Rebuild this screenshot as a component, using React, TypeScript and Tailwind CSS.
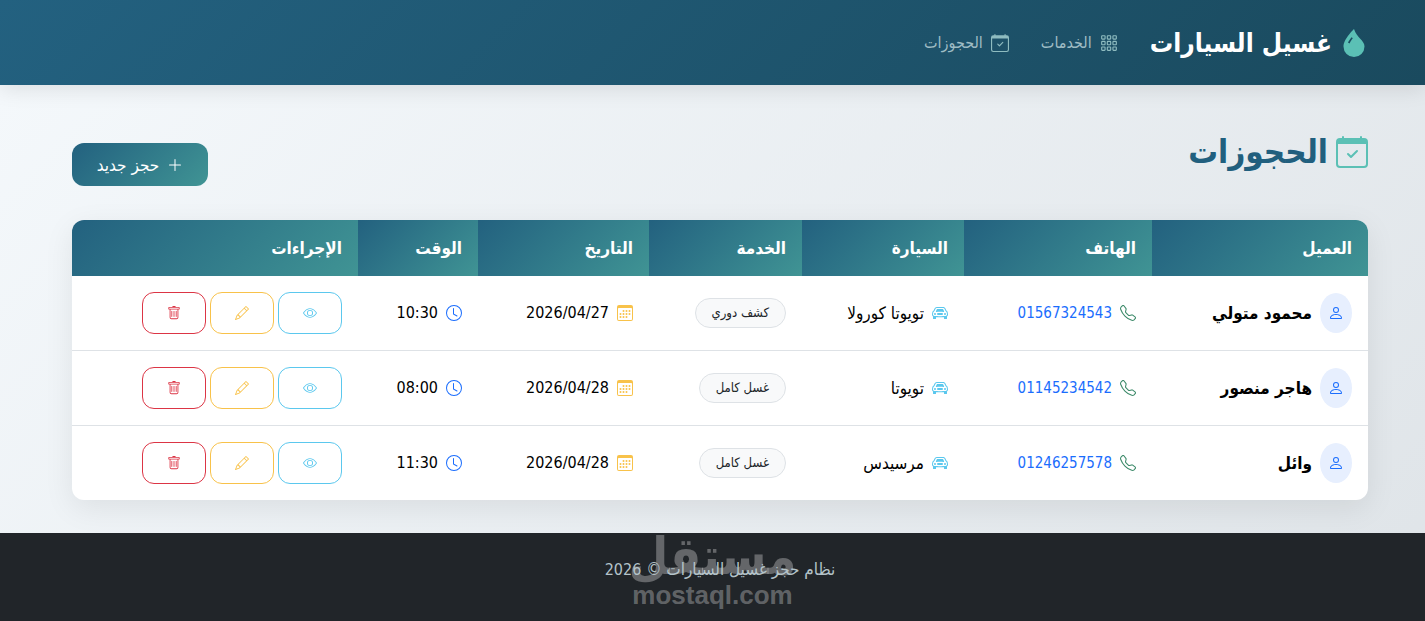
import type { ReactNode } from 'react';
import type { IconType } from 'react-icons';
import {
  BsCalendar3, BsCalendarCheck, BsCarFront, BsClock, BsDropletFill, BsEye,
  BsGrid3X3Gap, BsPencil, BsPerson, BsPlusLg, BsTelephone, BsTrash,
} from 'react-icons/bs';

interface Booking {
  id: number;
  customer: string;
  phone: string;
  car: string;
  service: string;
  date: string;
  time: string;
}

const BOOKINGS: Booking[] = [
  { id: 1, customer: 'محمود متولي', phone: '01567324543', car: 'تويوتا كورولا', service: 'كشف دوري', date: '2026/04/27', time: '10:30' },
  { id: 2, customer: 'هاجر منصور', phone: '01145234542', car: 'تويوتا', service: 'غسل كامل', date: '2026/04/28', time: '08:00' },
  { id: 3, customer: 'وائل', phone: '01246257578', car: 'مرسيدس', service: 'غسل كامل', date: '2026/04/28', time: '11:30' },
];

const COLUMNS = [
  { label: 'العميل', width: 'w-[216px]' },
  { label: 'الهاتف', width: 'w-[188px]' },
  { label: 'السيارة', width: 'w-[162px]' },
  { label: 'الخدمة', width: 'w-[153px]' },
  { label: 'التاريخ', width: 'w-[171px]' },
  { label: 'الوقت', width: 'w-[120px]' },
  { label: 'الإجراءات', width: 'w-[286px]' },
];

const ACTIONS: { label: string; icon: IconType; colour: string }[] = [
  { label: 'عرض', icon: BsEye, colour: 'border-[#5bc8ee] text-[#5bc8ee]' },
  { label: 'تعديل', icon: BsPencil, colour: 'border-[#f8c24a] text-[#f8c24a]' },
  { label: 'حذف', icon: BsTrash, colour: 'border-[#dc3545] text-[#dc3545]' },
];

function NavLink({ icon: Icon, children }: { icon: IconType; children: ReactNode }) {
  return (
    <a href="#" className="flex items-center gap-2 text-base text-[#9fbcc4] hover:text-white">
      <Icon className="size-[18px] text-[#8fbcc0]" />
      {children}
    </a>
  );
}

function Cell({ children }: { children: ReactNode }) {
  return <td className="border-b border-[#dee2e6] px-4 group-last:border-b-0">{children}</td>;
}

function IconCell({ icon: Icon, colour, children }: { icon: IconType; colour: string; children: ReactNode }) {
  return (
    <Cell>
      <div className="flex items-center gap-2 whitespace-nowrap">
        <Icon className={`size-4 shrink-0 ${colour}`} />
        {children}
      </div>
    </Cell>
  );
}

export default function App() {
  return (
    <div
      dir="rtl"
      className="flex min-h-screen flex-col bg-linear-135 from-[#f5f9fc] to-[#dfe4e8] font-['DejaVu_Sans_Condensed','DejaVu_Sans',sans-serif] text-[17px] leading-6 text-black"
    >
      <header className="relative flex h-[85px] items-center gap-8 bg-linear-135 from-[#236180] to-[#1a4a5e] pr-[57px] pl-[72px] shadow-[0_4px_20px_rgba(0,0,0,0.1)]">
        <a href="#" className="flex items-center gap-2 text-[26px] font-bold text-white">
          <BsDropletFill className="size-7 text-[#5bc0b5]" />
          غسيل السيارات
        </a>
        <nav className="flex items-center gap-8">
          <NavLink icon={BsGrid3X3Gap}>الخدمات</NavLink>
          <NavLink icon={BsCalendarCheck}>الحجوزات</NavLink>
        </nav>
      </header>

      <main className="grow pt-[47px] pr-[57px] pb-8 pl-[72px]">
        <div className="mb-[34px] flex h-[54px] items-start justify-between">
          <h1 className="flex items-center gap-2 text-[33px] leading-10 font-bold text-[#215f7e]">
            <BsCalendarCheck className="size-8 text-[#5bc0b5]" />
            الحجوزات
          </h1>
          <button type="button" className="flex h-[43px] w-[136px] items-center justify-center gap-2 self-end rounded-xl bg-linear-135 from-[#23617f] to-[#409494] text-[17px] text-white">
            <BsPlusLg className="size-4" />
            حجز جديد
          </button>
        </div>

        <div className="overflow-hidden rounded-xl bg-white shadow-[0_8px_30px_rgba(0,0,0,0.08)]">
          <table className="w-full table-fixed border-separate border-spacing-0 text-right">
            <thead>
              <tr className="h-14">
                {COLUMNS.map((c) => (
                  <th key={c.label} scope="col" className={`bg-linear-135 from-[#23617f] to-[#409494] px-4 font-bold text-white ${c.width}`}>
                    {c.label}
                  </th>
                ))}
              </tr>
            </thead>
            <tbody>
              {BOOKINGS.map((b) => (
                <tr key={b.id} className="group h-[75px] last:h-[74px]">
                  <Cell>
                    <div className="flex items-center gap-2 font-bold whitespace-nowrap">
                      <span className="flex h-10 w-8 shrink-0 items-center justify-center rounded-[50%] bg-[#e7effe]">
                        <BsPerson className="size-4 text-[#1a6dfd]" />
                      </span>
                      {b.customer}
                    </div>
                  </Cell>
                  <IconCell icon={BsTelephone} colour="text-[#3c8a69]">
                    <a href={`tel:${b.phone}`} className="text-[15px] text-[#1a6dfd]">{b.phone}</a>
                  </IconCell>
                  <IconCell icon={BsCarFront} colour="text-[#5bc8ee]">{b.car}</IconCell>
                  <Cell>
                    <span className="inline-flex h-[30px] items-center rounded-full border border-[#dee2e6] bg-[#f8f9fa] px-4 align-middle text-[13px] whitespace-nowrap text-[#212529]">
                      {b.service}
                    </span>
                  </Cell>
                  <IconCell icon={BsCalendar3} colour="text-[#f8c24a]">
                    <span className="text-base">{b.date}</span>
                  </IconCell>
                  <IconCell icon={BsClock} colour="text-[#1a6dfd]">
                    <span className="text-base">{b.time}</span>
                  </IconCell>
                  <Cell>
                    <div className="flex gap-1">
                      {ACTIONS.map(({ label, icon: Icon, colour }) => (
                        <button key={label} type="button" aria-label={label} className={`flex h-[42px] w-16 items-center justify-center rounded-xl border ${colour}`}>
                          <Icon className="size-[14px]" />
                        </button>
                      ))}
                    </div>
                  </Cell>
                </tr>
              ))}
            </tbody>
          </table>
        </div>
      </main>

      <footer className="relative h-[88px] bg-[#212529] pt-6 pl-[15px] text-center">
        <p className="relative z-10 text-[#b4c3c9]">
          نظام حجز غسيل السيارات © <span className="text-base">2026</span>
        </p>
        {/* Marketplace watermark */}
        <div aria-hidden="true" className="absolute inset-0 flex flex-col items-center justify-end pb-3 font-bold text-white/30">
          <span className="text-[51px] leading-[48px]">مستقل</span>
          <span dir="ltr" className="font-['Liberation_Sans',sans-serif] text-[26px] leading-7">mostaql.com</span>
        </div>
      </footer>
    </div>
  );
}
